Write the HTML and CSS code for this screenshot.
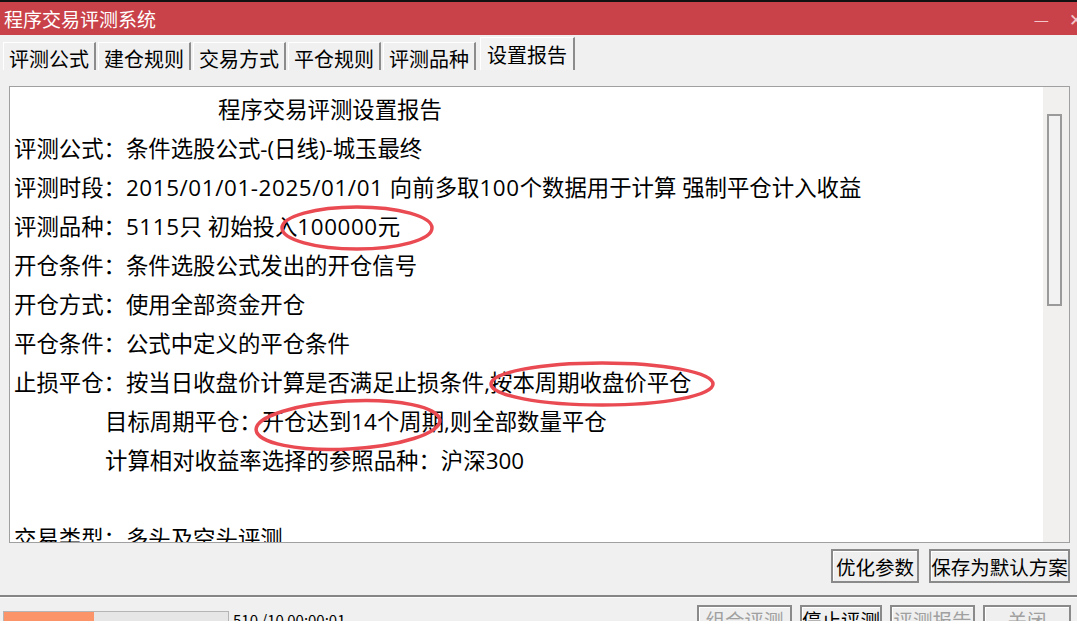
FILE: index.html
```html
<!DOCTYPE html>
<html>
<head>
    <meta charset="UTF-8">
    <title>程序交易评测系统</title>
    <link rel="stylesheet" href="styles.css">
</head>
<body>
    <div class="top-strip"></div>
    <div class="titlebar">
        <span class="title">程序交易评测系统</span>
        <span class="win-btn min">&#8212;</span>
        <span class="win-btn close">&#10005;</span>
    </div>

    <div class="tabs">
        <div class="tab">评测公式</div>
        <div class="tab">建仓规则</div>
        <div class="tab">交易方式</div>
        <div class="tab">平仓规则</div>
        <div class="tab">评测品种</div>
        <div class="tab active">设置报告</div>
    </div>

    <div class="page">
        <div class="report-box">
            <div class="report">
                <div class="line heading">程序交易评测设置报告</div>
                <div class="line">评测公式：条件选股公式-(日线)-城玉最终</div>
                <div class="line">评测时段：<span class="num">2015/01/01-2025/01/01 </span>向前多取<span class="num">100</span>个数据用于计算 强制平仓计入收益</div>
                <div class="line">评测品种：<span class="num">5115</span>只 初始投入<span class="num">100000</span>元</div>
                <div class="line">开仓条件：条件选股公式发出的开仓信号</div>
                <div class="line">开仓方式：使用全部资金开仓</div>
                <div class="line">平仓条件：公式中定义的平仓条件</div>
                <div class="line">止损平仓：按当日收盘价计算是否满足止损条件,按本周期收盘价平仓</div>
                <div class="line sub">目标周期平仓：开仓达到14个周期,则全部数量平仓</div>
                <div class="line sub">计算相对收益率选择的参照品种：沪深300</div>
                <div class="line">&nbsp;</div>
                <div class="line">交易类型：多头及空头评测</div>
            </div>
            <div class="scrollbar">
                <div class="thumb"></div>
            </div>
            <!-- hand-drawn marks over the report -->
            <svg class="marks" width="1061" height="457" viewBox="0 0 1061 457">
                <ellipse cx="347" cy="141" rx="75" ry="21" />
                <ellipse cx="592" cy="297" rx="111" ry="21" />
                <ellipse cx="338" cy="338" rx="92" ry="24" transform="rotate(-3 338 338)" />
            </svg>
        </div>

        <div class="actions">
            <button class="btn opt">优化参数</button>
            <button class="btn save">保存为默认方案</button>
        </div>
    </div>

    <div class="divider"></div>

    <div class="statusbar">
        <div class="progress"><div class="fill" style="width: 40%"></div></div>
        <span class="status-text">510 /10 00:00:01</span>
        <div class="bottom-btns">
            <button class="btn off w1">组合评测</button>
            <button class="btn w2">停止评测</button>
            <button class="btn off w3">评测报告</button>
            <button class="btn off w4">关闭</button>
        </div>
    </div>
</body>
</html>
```

FILE: styles.css
```css
body {
    margin: 0;
    width: 1077px;
    height: 621px;
    overflow: hidden;
    background-color: #f0f0f0;
    font-family: "Noto Sans CJK SC", "Noto Sans", sans-serif;
    color: #000;
}
.top-strip {
    height: 2px;
    background-color: #111;
}
.titlebar {
    height: 33px;
    background-color: #c94249;
    display: flex;
    align-items: center;
    padding-left: 4px;
    color: #fff;
    font-size: 19px;
}
.title {
    flex: 1;
}
.win-btn {
    color: #f3c7ca;
    font-size: 17px;
}
.min {
    margin-right: 20px;
}
.close {
    margin-right: -6px;
}
.tabs {
    height: 35px;
    display: flex;
    align-items: flex-end;
    padding-left: 3px;
    border-bottom: 1px solid #f0f0f0;
}
.tab {
    height: 27px;
    padding: 0 5px 0 5px;
    font-size: 20px;
    line-height: 32px;
    overflow: hidden;
    border-top: 1px solid #fff;
    border-left: 1px solid #fff;
    border-right: 2px solid #8c8c8c;
    margin-right: 2px;
}
.tab.active {
    height: 32px;
    line-height: 34px;
    background-color: #f3f3f3;
    padding: 0 6px 0 6px;
    margin-left: 2px;
}
.page {
    padding: 15px 7px 0 9px;
}
.report-box {
    position: relative;
    height: 455px;
    border: 1px solid #a0a0a0;
    background-color: #fff;
    display: flex;
}
.report {
    flex: 1;
    padding: 3px 0 0 4px;
    font-family: "Open Sans", "Noto Sans CJK SC", sans-serif;
    font-size: 22.4px;
    line-height: 39px;
    overflow: hidden;
    white-space: nowrap;
}
.num {
    letter-spacing: 0.6px;
}
.heading {
    padding-left: 204px;
}
.sub {
    padding-left: 91px;
}
.scrollbar {
    width: 26px;
    background-color: #f1f0ef;
    padding-top: 27px;
}
.thumb {
    width: 11px;
    height: 188px;
    margin-left: 4px;
    border: 2px solid #9a9a9a;
    background-color: #f2f2f2;
}
.marks {
    position: absolute;
    left: 0;
    top: 0;
    pointer-events: none;
}
.marks ellipse {
    fill: none;
    stroke: #ea4a52;
    stroke-width: 3.5;
}
.actions {
    display: flex;
    justify-content: flex-end;
    gap: 10px;
    margin-top: 6px;
    padding-right: 0;
}
.btn {
    height: 34px;
    padding: 0;
    font-family: "Noto Sans CJK SC", sans-serif;
    font-size: 19.5px;
    color: #000;
    background-color: #efefef;
    border: 2px solid #8a8a8a;
    box-shadow: inset 1px 1px 0 #fff;
}
.opt { width: 88px; }
.save { width: 141px; }
.divider {
    margin-top: 12px;
    height: 2px;
    background-color: #858585;
    border-bottom: 1px solid #fcfcfc;
}
.statusbar {
    display: flex;
    align-items: flex-start;
    padding-left: 3px;
}
.progress {
    margin-top: 13px;
    width: 224px;
    height: 12px;
    border: 1px solid #b5b5b5;
    background-color: #e6e6e6;
}
.fill {
    height: 100%;
    background-color: #fb9468;
}
.status-text {
    margin-top: 13px;
    margin-left: 4px;
    font-size: 15px;
    line-height: 18px;
}
.bottom-btns {
    margin-left: auto;
    margin-top: 7px;
    display: flex;
    gap: 8px;
    padding-right: 6px;
}
.bottom-btns .btn {
    height: 30px;
    line-height: 24px;
}
.btn.off {
    color: #a0a0a0;
}
.w1 { width: 95px; }
.w2 { width: 82px; }
.w3 { width: 85px; }
.w4 { width: 88px; }
```
